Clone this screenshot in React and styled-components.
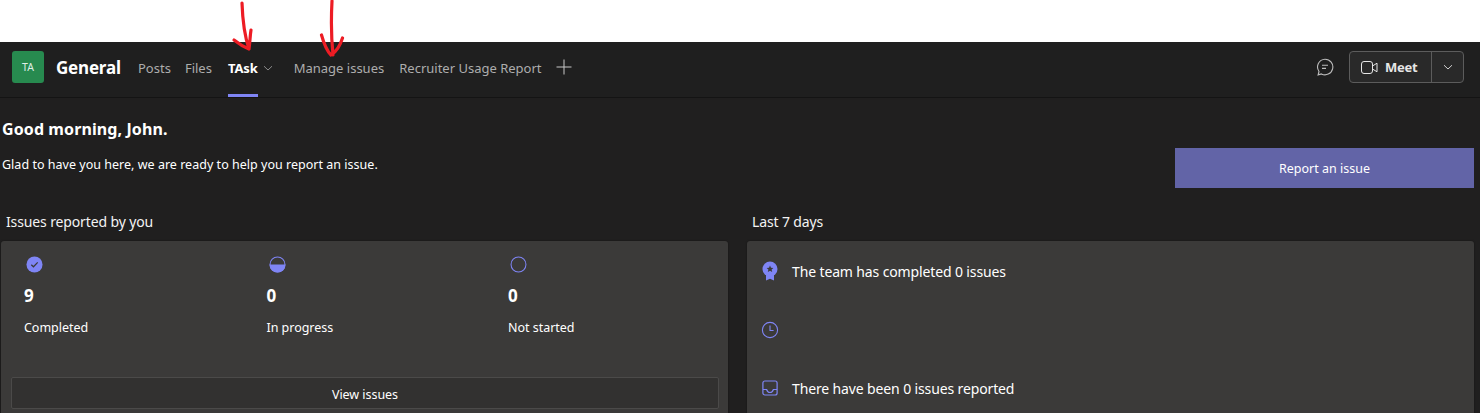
import React from 'react';
import styled, { createGlobalStyle } from 'styled-components';

const GlobalStyle = createGlobalStyle`
    html, body {
        margin: 0;
        padding: 0;
        background: #201f1f;
    }
    * {
        box-sizing: border-box;
    }
`;

const Page = styled.div`
    position: relative;
    width: 1480px;
    height: 413px;
    overflow: hidden;
    display: flex;
    flex-direction: column;
    font-family: "Noto Sans", "Open Sans", "Liberation Sans", sans-serif;
    color: #fff;
    background: #201f1f;
`;

const TopStrip = styled.div`
    height: 42px;
    flex: none;
    background: #fff;
`;

const Arrow = styled.svg`
    position: absolute;
    top: 0;
    left: ${p => p.$left}px;
    width: 30px;
    height: 60px;
`;

const Header = styled.header`
    height: 56px;
    flex: none;
    display: flex;
    align-items: center;
    padding: 0 16px 5px 12px;
    background: #1f1f1f;
    border-bottom: 1px solid #141414;
`;

const Avatar = styled.div`
    width: 32px;
    height: 32px;
    margin-right: 12px;
    display: flex;
    align-items: center;
    justify-content: center;
    border-radius: 3px;
    background: #278a4f;
    font-size: 10.5px;
    color: #dfeee5;
`;

const Title = styled.div`
    width: 82px;
    font-size: 17px;
    font-weight: 700;
    letter-spacing: -0.2px;
`;

const Tabs = styled.nav`
    align-self: stretch;
    height: 55px;
    display: flex;
    align-items: stretch;
`;

const Tab = styled.div`
    position: relative;
    margin-right: ${p => p.$gap}px;
    padding-bottom: 3px;
    display: flex;
    align-items: center;
    font-size: 13px;
    font-weight: ${p => (p.$active ? 700 : 400)};
    letter-spacing: ${p => (p.$active ? '-0.1px' : '0')};
    color: ${p => (p.$active ? '#fff' : '#adadad')};
`;

const ActiveBar = styled.span`
    position: absolute;
    left: 0;
    bottom: 0;
    width: 30px;
    height: 3px;
    background: #7f85f5;
`;

const TabChevron = styled.svg`
    width: 10px;
    height: 10px;
    margin-left: 5px;
`;

const PlusIcon = styled.svg`
    width: 16px;
    height: 16px;
`;

const HeaderRight = styled.div`
    margin-left: auto;
    display: flex;
    align-items: center;
`;

const ChatIcon = styled.svg`
    width: 18px;
    height: 18px;
    margin-right: 15px;
`;

const MeetGroup = styled.div`
    width: 115px;
    height: 32px;
    display: flex;
    border: 1px solid #5c5c5c;
    border-radius: 4px;
    background: #292929;
`;

const MeetMain = styled.div`
    width: 82px;
    display: flex;
    align-items: center;
    padding-left: 11px;
    gap: 7px;
    border-right: 1px solid #5c5c5c;
    font-size: 13px;
    font-weight: 700;
    letter-spacing: -0.3px;
    color: #e6e6e6;
`;

const MeetMore = styled.div`
    flex: 1;
    display: flex;
    align-items: center;
    justify-content: center;
`;

const Content = styled.main`
    flex: 1;
    padding: 0 6px 0 1px;
`;

const Intro = styled.section`
    height: 91px;
    display: flex;
    justify-content: space-between;
    align-items: flex-start;
`;

const IntroText = styled.div`
    padding: 21px 0 0 1px;
`;

const Greeting = styled.h1`
    margin: 0 0 16px;
    font-size: 16px;
    line-height: 21px;
    font-weight: 700;
    letter-spacing: 0.1px;
`;

const Subtitle = styled.p`
    margin: 0;
    font-size: 12.5px;
    line-height: 18px;
    letter-spacing: 0.02px;
`;

const ReportButton = styled.button`
    width: 299px;
    height: 40px;
    margin-top: 50px;
    border: 0;
    background: #6264a7;
    color: #fff;
    font: inherit;
    font-size: 12.5px;
    letter-spacing: 0;
`;

const Columns = styled.div`
    display: grid;
    grid-template-columns: 727px 727px;
    column-gap: 19px;
`;

const SectionTitle = styled.h2`
    height: 52px;
    margin: 0;
    padding: 23px 0 0 ${p => p.$indent}px;
    font-size: 14px;
    line-height: 19px;
    font-weight: 400;
    letter-spacing: -0.13px;
    color: #f3f3f3;
`;

const Card = styled.div`
    height: 190px;
    background: #3b3a39;
    border-radius: 3px;
    box-shadow: 0 0 2px rgba(0, 0, 0, 0.4);
`;

const Stats = styled.div`
    height: 136px;
    padding: 15px 0 0 23px;
    display: grid;
    grid-template-columns: 242.5px 241.5px 1fr;
`;

const Stat = styled.div`
    display: flex;
    flex-direction: column;
    align-items: flex-start;
`;

const StatIcon = styled.svg`
    width: 17px;
    height: 17px;
    margin: 0 0 0 2px;
    display: block;
`;

const StatValue = styled.div`
    margin-top: 13px;
    font-size: 17px;
    line-height: 20px;
    font-weight: 700;
`;

const StatLabel = styled.div`
    margin-top: 13px;
    font-size: 12.5px;
    line-height: 18px;
    letter-spacing: -0.03px;
`;

const ViewButton = styled.button`
    display: block;
    width: 708px;
    height: 32px;
    margin-left: 10px;
    padding-top: 3px;
    border: 1px solid #4b4a49;
    border-radius: 2px;
    background: #323130;
    color: #fff;
    font: inherit;
    font-size: 12.5px;
    letter-spacing: -0.05px;
`;

const Rows = styled.div`
    padding-top: 1px;
`;

const Row = styled.div`
    height: 58.5px;
    display: flex;
    align-items: center;
    padding-left: 14px;
    gap: 13px;
    font-size: 14px;
    letter-spacing: -0.13px;
`;

const RowIcon = styled.svg`
    width: 18px;
    height: 20px;
    flex: none;
`;

const ArrowShape = ({ left, d }) => (
    <Arrow $left={left} viewBox="0 0 30 60">
        <path d={d} fill="none" stroke="#ed1c24" strokeWidth="3.2" strokeLinecap="round" strokeLinejoin="round" />
    </Arrow>
);

export default function App() {
    return (
        <Page>
            <GlobalStyle />
            <TopStrip />
            <ArrowShape left={230} d="M12 3 C12.5 18 14 34 19 49 M4 40 C9 44 14 47 19 49 C20 42 20 36 21 30" />
            <ArrowShape left={317} d="M15 1 C14 20 14 36 16 55 M4.5 35 C7 44 11 52 14 55 C19 52 23 46 25.5 38" />
            <Header>
                <Avatar>TA</Avatar>
                <Title>General</Title>
                <Tabs>
                    <Tab $gap={14}>Posts</Tab>
                    <Tab $gap={16}>Files</Tab>
                    <Tab $active $gap={21}>
                        TAsk
                        <TabChevron viewBox="0 0 10 10">
                            <path d="M1 3.2 5 7 9 3.2" fill="none" stroke="#8a8a8a" strokeWidth="1" />
                        </TabChevron>
                        <ActiveBar />
                    </Tab>
                    <Tab $gap={15}>Manage issues</Tab>
                    <Tab $gap={15}>Recruiter Usage Report</Tab>
                </Tabs>
                <PlusIcon viewBox="0 0 16 16">
                    <path d="M8 .5v15M.5 8h15" stroke="#c8c8c8" strokeWidth="1" />
                </PlusIcon>
                <HeaderRight>
                    <ChatIcon viewBox="0 0 18 18">
                        <path d="M9 1.2a7.8 7.8 0 1 1-3.6 14.7l-3.3 1 .9-3.4A7.8 7.8 0 0 1 9 1.2Z" fill="none" stroke="#bdbdbd" strokeWidth="1.1" />
                        <path d="M6 7.2h6M6 10.4h4" stroke="#bdbdbd" strokeWidth="1.1" />
                    </ChatIcon>
                    <MeetGroup>
                        <MeetMain>
                            <svg width="17" height="13" viewBox="0 0 17 13">
                                <rect x=".5" y=".5" width="11" height="12" rx="2.5" fill="none" stroke="#e6e6e6" />
                                <path d="M11.5 5 16 2.2v8.6L11.5 8" fill="none" stroke="#e6e6e6" />
                            </svg>
                            Meet
                        </MeetMain>
                        <MeetMore>
                            <svg width="10" height="10" viewBox="0 0 10 10">
                                <path d="M1 3.2 5 7 9 3.2" fill="none" stroke="#d0d0d0" strokeWidth="1" />
                            </svg>
                        </MeetMore>
                    </MeetGroup>
                </HeaderRight>
            </Header>
            <Content>
                <Intro>
                    <IntroText>
                        <Greeting>Good morning, John.</Greeting>
                        <Subtitle>Glad to have you here, we are ready to help you report an issue.</Subtitle>
                    </IntroText>
                    <ReportButton>Report an issue</ReportButton>
                </Intro>
                <Columns>
                    <div>
                        <SectionTitle $indent={5}>Issues reported by you</SectionTitle>
                        <Card>
                            <Stats>
                                <Stat>
                                    <StatIcon viewBox="0 0 18 18">
                                        <circle cx="9" cy="9" r="8.5" fill="#7f85f5" />
                                        <path d="M5.6 9.2 7.9 11.4 12.4 6.8" fill="none" stroke="#3b3a39" strokeWidth="1.3" />
                                    </StatIcon>
                                    <StatValue>9</StatValue>
                                    <StatLabel>Completed</StatLabel>
                                </Stat>
                                <Stat>
                                    <StatIcon viewBox="0 0 18 18">
                                        <circle cx="9" cy="9" r="7.9" fill="none" stroke="#7f85f5" strokeWidth="1.1" />
                                        <path d="M.5 9h17a8.5 8.5 0 0 1-17 0Z" fill="#7f85f5" />
                                    </StatIcon>
                                    <StatValue>0</StatValue>
                                    <StatLabel>In progress</StatLabel>
                                </Stat>
                                <Stat>
                                    <StatIcon viewBox="0 0 18 18">
                                        <circle cx="9" cy="9" r="7.9" fill="none" stroke="#7f85f5" strokeWidth="1.1" />
                                    </StatIcon>
                                    <StatValue>0</StatValue>
                                    <StatLabel>Not started</StatLabel>
                                </Stat>
                            </Stats>
                            <ViewButton>View issues</ViewButton>
                        </Card>
                    </div>
                    <div>
                        <SectionTitle $indent={5}>Last 7 days</SectionTitle>
                        <Card>
                            <Rows>
                                <Row>
                                    <RowIcon viewBox="0 0 18 20">
                                        <path d="M5 13v6.4l4-1.6 4 1.6V13Z" fill="#7f85f5" />
                                        <circle cx="9" cy="8" r="7.5" fill="#7f85f5" />
                                        <path d="m9 4.6 1 2.2 2.4.2-1.8 1.6.6 2.4L9 9.7 6.8 11l.6-2.4L5.6 7l2.4-.2Z" fill="#3b3a39" />
                                    </RowIcon>
                                    The team has completed 0 issues
                                </Row>
                                <Row>
                                    <RowIcon viewBox="0 0 18 20">
                                        <circle cx="9" cy="10" r="7.6" fill="none" stroke="#7f85f5" strokeWidth="1.1" />
                                        <path d="M9 5.4V10.5h3.6" fill="none" stroke="#7f85f5" strokeWidth="1.1" />
                                    </RowIcon>
                                </Row>
                                <Row>
                                    <RowIcon viewBox="0 0 18 20">
                                        <rect x="1.9" y="3" width="14.2" height="14" rx="2" fill="none" stroke="#7f85f5" strokeWidth="1.2" />
                                        <path d="M2 11.5h3.6c.6 2 2 3 3.4 3s2.8-1 3.4-3H16" fill="none" stroke="#7f85f5" strokeWidth="1.2" />
                                    </RowIcon>
                                    There have been 0 issues reported
                                </Row>
                            </Rows>
                        </Card>
                    </div>
                </Columns>
            </Content>
        </Page>
    );
}
